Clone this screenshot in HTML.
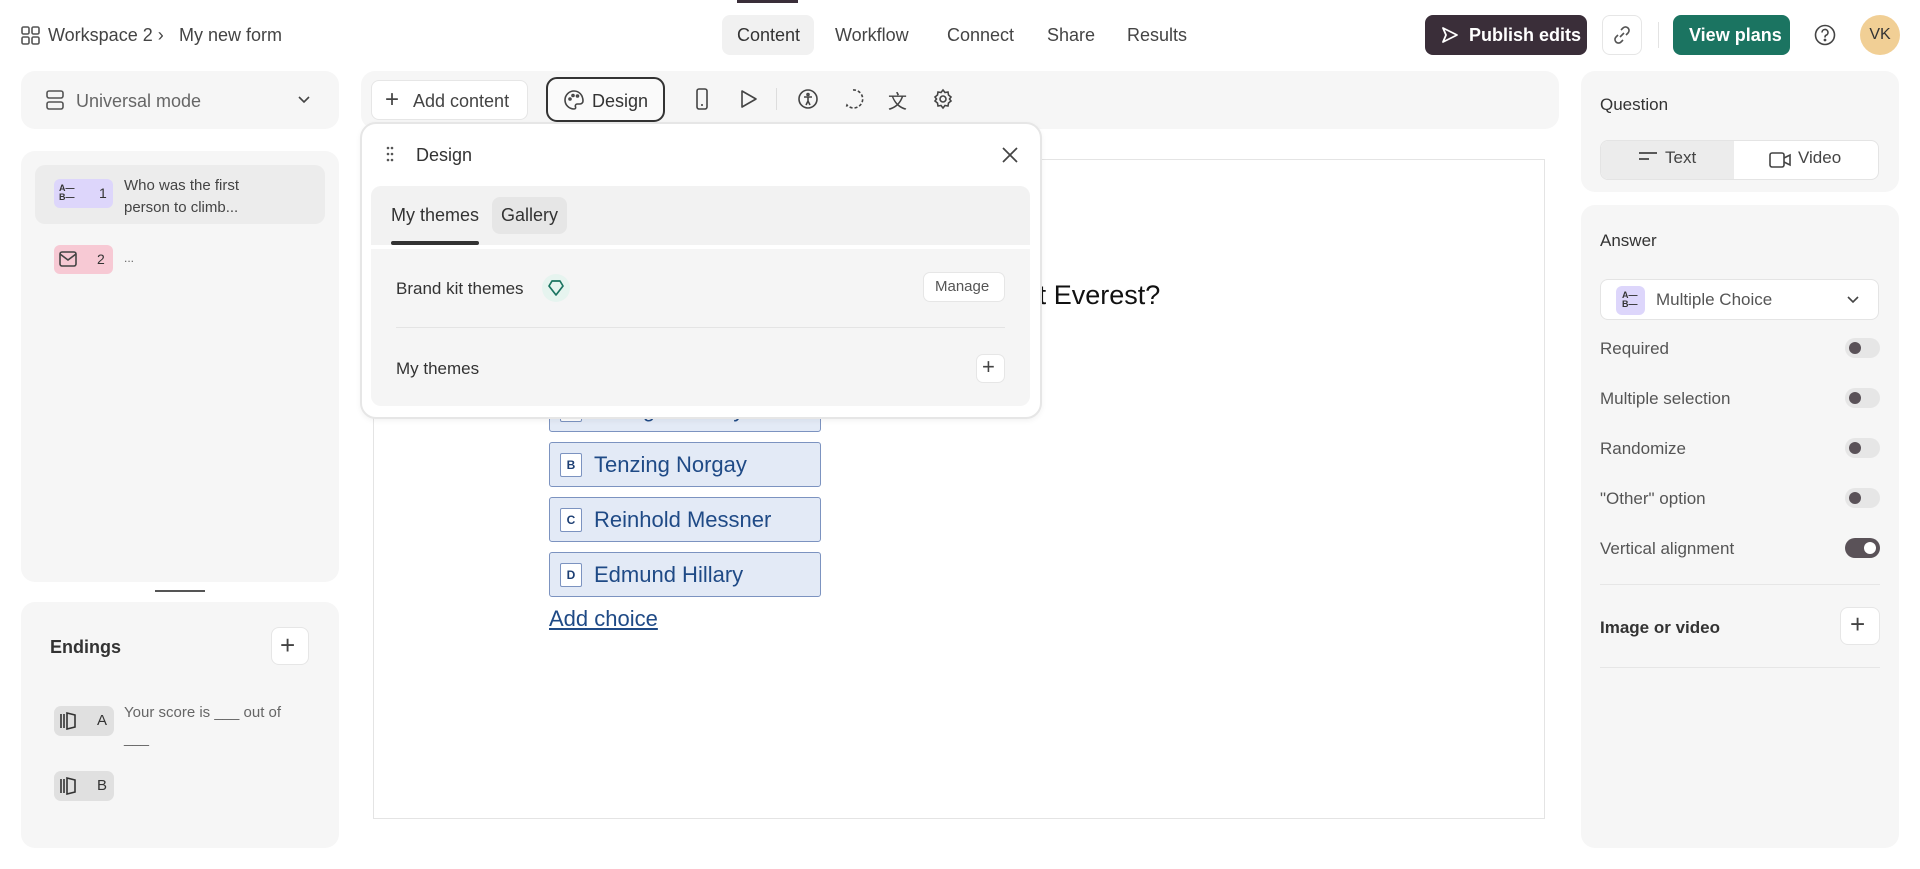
<!DOCTYPE html>
<html><head><meta charset="utf-8"><style>
*{box-sizing:border-box;margin:0;padding:0}
body{width:1920px;height:869px;background:#fff;font-family:"Liberation Sans",sans-serif;color:#333;position:relative;overflow:hidden}
.a{position:absolute}
.panel{position:absolute;background:#f6f6f6;border-radius:14px}
.t{position:absolute;white-space:nowrap}
.btnw{position:absolute;background:#fff;border:1px solid #e6e6e6;border-radius:8px}
.tog{position:absolute;left:1845px;width:35px;height:20px;border-radius:10px;background:#e6e6e6}
.tog i{position:absolute;left:4px;top:4px;width:12px;height:12px;border-radius:50%;background:#5a5258}
.choice{position:absolute;left:549px;width:272px;height:45px;background:#e3eaf6;border:1px solid #7c93c0;border-radius:3px}
.choice b{position:absolute;left:10px;top:10px;width:22px;height:24px;background:#fff;border:1px solid #7c93c0;border-radius:2px;font-size:12px;color:#1d3f73;text-align:center;line-height:22px}
.choice span{position:absolute;left:44px;top:9px;font-size:22px;color:#1f4a86}
svg{position:absolute}
</style></head><body>
<!-- top bar -->
<div class="a" style="left:737px;top:0;width:61px;height:3px;background:#3a2e39"></div>
<svg style="left:21px;top:26px" width="19" height="19" viewBox="0 0 19 19" fill="none" stroke="#555" stroke-width="1.6"><rect x="1" y="1" width="7" height="7" rx="1.5"/><rect x="11" y="1" width="7" height="7" rx="1.5"/><rect x="1" y="11" width="7" height="7" rx="1.5"/><rect x="11" y="11" width="7" height="7" rx="1.5"/></svg>
<div class="t" style="left:48px;top:25px;font-size:18px;color:#444">Workspace 2 ›</div>
<div class="t" style="left:179px;top:25px;font-size:18px;color:#444">My new form</div>
<div class="a" style="left:722px;top:15px;width:92px;height:40px;background:#f1f1f1;border-radius:8px"></div>
<div class="t" style="left:737px;top:25px;font-size:18px;color:#333">Content</div>
<div class="t" style="left:835px;top:25px;font-size:18px;color:#444">Workflow</div>
<div class="t" style="left:947px;top:25px;font-size:18px;color:#444">Connect</div>
<div class="t" style="left:1047px;top:25px;font-size:18px;color:#444">Share</div>
<div class="t" style="left:1127px;top:25px;font-size:18px;color:#444">Results</div>
<div class="a" style="left:1425px;top:15px;width:162px;height:40px;background:#3a2e39;border-radius:8px"></div>
<svg style="left:1441px;top:26px" width="18" height="18" viewBox="0 0 18 18" fill="none" stroke="#fff" stroke-width="1.8" stroke-linejoin="round"><path d="M2 2 L16 9 L2 16 L5 9 Z"/></svg>
<div class="t" style="left:1469px;top:25px;font-size:18px;color:#fff;font-weight:bold">Publish edits</div>
<div class="btnw" style="left:1602px;top:15px;width:40px;height:40px"></div>
<svg style="left:1612px;top:25px" width="20" height="20" viewBox="0 0 20 20" fill="none" stroke="#555" stroke-width="1.6"><path d="M8 12 L12 8"/><path d="M9 5 L11 3 a3.5 3.5 0 0 1 5 5 L14 10"/><path d="M11 15 L9 17 a3.5 3.5 0 0 1 -5 -5 L6 10"/></svg>
<div class="a" style="left:1658px;top:22px;width:1px;height:26px;background:#e3e3e3"></div>
<div class="a" style="left:1673px;top:15px;width:117px;height:40px;background:#1b7461;border-radius:8px"></div>
<div class="t" style="left:1689px;top:25px;font-size:18px;color:#fff;font-weight:bold">View plans</div>
<svg style="left:1814px;top:24px" width="22" height="22" viewBox="0 0 22 22" fill="none" stroke="#444" stroke-width="1.6"><circle cx="11" cy="11" r="9.5"/><path d="M8 8.5 a3 3 0 1 1 4 2.8 c-1 .4 -1 1 -1 2.2"/><circle cx="11" cy="16" r=".6" fill="#444"/></svg>
<div class="a" style="left:1860px;top:15px;width:40px;height:40px;border-radius:50%;background:#f1cf95;font-size:16px;line-height:40px;text-align:center;color:#333">VK</div>

<!-- left panels -->
<div class="panel" style="left:21px;top:71px;width:318px;height:58px"></div>
<svg style="left:46px;top:90px" width="18" height="20" viewBox="0 0 18 20" fill="none" stroke="#555" stroke-width="1.6"><rect x="1" y="1" width="16" height="7" rx="2"/><rect x="1" y="12" width="16" height="7" rx="2"/></svg>
<div class="t" style="left:76px;top:91px;font-size:18px;color:#666">Universal mode</div>
<svg style="left:297px;top:95px" width="14" height="10" viewBox="0 0 14 10" fill="none" stroke="#444" stroke-width="1.6"><path d="M2 2 L7 7 L12 2"/></svg>

<div class="panel" style="left:21px;top:151px;width:318px;height:431px"></div>
<div class="a" style="left:35px;top:165px;width:290px;height:59px;background:#ececec;border-radius:10px"></div>
<div class="a" style="left:54px;top:179px;width:59px;height:29px;background:#ddd6fb;border-radius:6px"></div>
<div class="t" style="left:59px;top:184px;font-size:9px;line-height:9px;color:#333;font-weight:bold">A—<br>B—</div>
<div class="t" style="left:99px;top:185px;font-size:14px;color:#333">1</div>
<div class="t" style="left:124px;top:175px;font-size:15px;line-height:22px;color:#444">Who was the first<br>person to climb...</div>
<div class="a" style="left:54px;top:245px;width:59px;height:29px;background:#f7c9d4;border-radius:6px"></div>
<svg style="left:59px;top:251px" width="18" height="16" viewBox="0 0 18 16" fill="none" stroke="#444" stroke-width="1.6"><rect x="1" y="1" width="16" height="14" rx="2"/><path d="M1 3 L9 9 L17 3"/></svg>
<div class="t" style="left:97px;top:251px;font-size:14px;color:#333">2</div>
<div class="t" style="left:124px;top:251px;font-size:12px;color:#666">...</div>
<div class="a" style="left:155px;top:590px;width:50px;height:2px;background:#555"></div>

<div class="panel" style="left:21px;top:602px;width:318px;height:246px"></div>
<div class="t" style="left:50px;top:637px;font-size:18px;font-weight:bold;color:#333">Endings</div>
<div class="btnw" style="left:271px;top:627px;width:38px;height:38px"></div>
<div class="t" style="left:280px;top:630px;font-size:26px;color:#444;font-weight:300">+</div>
<div class="a" style="left:54px;top:706px;width:60px;height:30px;background:#e0e0e0;border-radius:7px"></div>
<svg style="left:59px;top:712px" width="20" height="18" viewBox="0 0 20 18" fill="none" stroke="#333" stroke-width="1.6"><path d="M2 2v14M5 2v14"/><path d="M8 1 L16 3 V15 L8 17 Z"/></svg>
<div class="t" style="left:97px;top:712px;font-size:15px;color:#333">A</div>
<div class="t" style="left:124px;top:700px;font-size:15px;line-height:26px;color:#666">Your score is ___ out of<br>___</div>
<div class="a" style="left:54px;top:771px;width:60px;height:30px;background:#e0e0e0;border-radius:7px"></div>
<svg style="left:59px;top:777px" width="20" height="18" viewBox="0 0 20 18" fill="none" stroke="#333" stroke-width="1.6"><path d="M2 2v14M5 2v14"/><path d="M8 1 L16 3 V15 L8 17 Z"/></svg>
<div class="t" style="left:97px;top:777px;font-size:15px;color:#333">B</div>

<!-- toolbar -->
<div class="panel" style="left:361px;top:71px;width:1198px;height:58px"></div>
<div class="btnw" style="left:371px;top:80px;width:157px;height:40px"></div>
<div class="t" style="left:385px;top:86px;font-size:24px;color:#444;font-weight:300">+</div>
<div class="t" style="left:413px;top:91px;font-size:18px;color:#444">Add content</div>
<div class="a" style="left:546px;top:77px;width:119px;height:45px;border:2px solid #333;border-radius:11px;background:#fafafa"></div>
<svg style="left:563px;top:89px" width="22" height="22" viewBox="0 0 22 22" fill="none" stroke="#444" stroke-width="1.6"><path d="M11 2 a9 9 0 1 0 0 18 c1.5 0 2 -1 1.5 -2.2 c-.6 -1.4 .3 -2.8 1.8 -2.8 H17 a3 3 0 0 0 3 -3 C20 6 16 2 11 2z"/><circle cx="7" cy="10" r="1"/><circle cx="10" cy="6.5" r="1"/><circle cx="14.5" cy="7" r="1"/></svg>
<div class="t" style="left:592px;top:91px;font-size:18px;color:#333">Design</div>
<svg style="left:694px;top:87px" width="16" height="24" viewBox="0 0 16 24" fill="none" stroke="#444" stroke-width="1.6"><rect x="3" y="2" width="10" height="20" rx="2"/><path d="M7 18h2"/></svg>
<svg style="left:737px;top:88px" width="22" height="22" viewBox="0 0 22 22" fill="none" stroke="#444" stroke-width="1.6" stroke-linejoin="round"><path d="M5 3 L19 11 L5 19 Z"/></svg>
<div class="a" style="left:776px;top:88px;width:1px;height:22px;background:#ddd"></div>
<svg style="left:797px;top:88px" width="22" height="22" viewBox="0 0 22 22" fill="none" stroke="#444" stroke-width="1.6"><circle cx="11" cy="11" r="9"/><circle cx="11" cy="6.5" r="1"/><path d="M7 9h8M11 9v4l-2 4M11 13l2 4"/></svg>
<svg style="left:842px;top:88px" width="22" height="22" viewBox="0 0 22 22" fill="none" stroke="#444" stroke-width="1.6" stroke-dasharray="3 2"><path d="M11 2 a9 9 0 1 1 -6 15 L4 20"/></svg>
<div class="t" style="left:888px;top:87px;font-size:19px;color:#444">文</div>
<svg style="left:932px;top:88px" width="22" height="22" viewBox="0 0 22 22" fill="none" stroke="#444" stroke-width="1.6"><circle cx="11" cy="11" r="3"/><path d="M11 2 l2 2.5 3 -.5 .5 3 2.5 2 -1.5 2 1.5 2 -2.5 2 -.5 3 -3 -.5 -2 2.5 -2 -2.5 -3 .5 -.5 -3 -2.5 -2 1.5 -2 -1.5 -2 2.5 -2 .5 -3 3 .5z"/></svg>

<!-- canvas -->
<div class="a" style="left:373px;top:159px;width:1172px;height:660px;border:1px solid #e4e4e4;background:#fff"></div>
<div class="t" style="left:566px;top:280px;font-size:27px;color:#111">Who was the first person to climb Mount Everest?</div>
<div class="choice" style="top:387px"><b>A</b><span>George Mallory</span></div>
<div class="choice" style="top:442px"><b>B</b><span>Tenzing Norgay</span></div>
<div class="choice" style="top:497px"><b>C</b><span>Reinhold Messner</span></div>
<div class="choice" style="top:552px"><b>D</b><span>Edmund Hillary</span></div>
<div class="t" style="left:549px;top:606px;font-size:22px;color:#1f4a86;text-decoration:underline">Add choice</div>

<!-- design popup -->
<div class="a" style="left:360px;top:122px;width:682px;height:297px;background:#fff;border:2px solid #e6e6e6;border-radius:16px;box-shadow:0 2px 6px rgba(0,0,0,.05)"></div>
<svg style="left:386px;top:146px" width="8" height="16" viewBox="0 0 8 16" fill="#555"><circle cx="2" cy="2" r="1.3"/><circle cx="6" cy="2" r="1.3"/><circle cx="2" cy="8" r="1.3"/><circle cx="6" cy="8" r="1.3"/><circle cx="2" cy="14" r="1.3"/><circle cx="6" cy="14" r="1.3"/></svg>
<div class="t" style="left:416px;top:145px;font-size:18px;color:#333">Design</div>
<svg style="left:1002px;top:147px" width="16" height="16" viewBox="0 0 16 16" fill="none" stroke="#444" stroke-width="1.7"><path d="M1 1 L15 15 M15 1 L1 15"/></svg>
<div class="a" style="left:371px;top:186px;width:659px;height:59px;background:#f2f2f2;border-radius:10px 10px 0 0"></div>
<div class="t" style="left:391px;top:205px;font-size:18px;color:#333">My themes</div>
<div class="a" style="left:391px;top:241px;width:88px;height:4px;background:#333;border-radius:2px"></div>
<div class="a" style="left:492px;top:197px;width:75px;height:37px;background:#e6e6e6;border-radius:8px"></div>
<div class="t" style="left:501px;top:205px;font-size:18px;color:#333">Gallery</div>
<div class="a" style="left:371px;top:249px;width:659px;height:157px;background:#f5f5f5;border-radius:0 0 10px 10px"></div>
<div class="t" style="left:396px;top:279px;font-size:17px;color:#333">Brand kit themes</div>
<div class="a" style="left:542px;top:274px;width:28px;height:28px;border-radius:50%;background:#e6f4ef"></div>
<svg style="left:547px;top:279px" width="18" height="18" viewBox="0 0 18 18" fill="none" stroke="#1b7461" stroke-width="1.7" stroke-linejoin="round"><path d="M5 2 H13 L16 7 L9 16 L2 7 Z"/></svg>
<div class="btnw" style="left:923px;top:272px;width:82px;height:30px;border-radius:7px"></div>
<div class="t" style="left:935px;top:278px;font-size:15px;color:#555">Manage</div>
<div class="a" style="left:396px;top:327px;width:609px;height:1px;background:#e4e4e4"></div>
<div class="t" style="left:396px;top:359px;font-size:17px;color:#333">My themes</div>
<div class="btnw" style="left:976px;top:354px;width:29px;height:29px;border-radius:7px"></div>
<div class="t" style="left:982px;top:354px;font-size:22px;color:#444;font-weight:300">+</div>

<!-- right panels -->
<div class="panel" style="left:1581px;top:71px;width:318px;height:121px"></div>
<div class="t" style="left:1600px;top:95px;font-size:17px;color:#333">Question</div>
<div class="a" style="left:1600px;top:140px;width:279px;height:40px;background:#fff;border:1px solid #e4e4e4;border-radius:8px;overflow:hidden"><div style="width:133px;height:40px;background:#ececec"></div></div>
<svg style="left:1639px;top:151px" width="18" height="10" viewBox="0 0 18 10" stroke="#444" stroke-width="1.7"><path d="M0 2h18M0 8h10"/></svg>
<div class="t" style="left:1665px;top:148px;font-size:17px;color:#444">Text</div>
<svg style="left:1769px;top:152px" width="22" height="16" viewBox="0 0 22 16" fill="none" stroke="#444" stroke-width="1.6"><rect x="1" y="1" width="14" height="14" rx="2"/><path d="M15 6 L21 3 V13 L15 10"/></svg>
<div class="t" style="left:1798px;top:148px;font-size:17px;color:#444">Video</div>

<div class="panel" style="left:1581px;top:205px;width:318px;height:643px"></div>
<div class="t" style="left:1600px;top:231px;font-size:17px;color:#333">Answer</div>
<div class="a" style="left:1600px;top:279px;width:279px;height:41px;background:#fff;border:1px solid #e4e4e4;border-radius:8px"></div>
<div class="a" style="left:1616px;top:286px;width:29px;height:29px;background:#ddd6fb;border-radius:6px"></div>
<div class="t" style="left:1622px;top:291px;font-size:9px;line-height:9px;color:#333;font-weight:bold">A—<br>B—</div>
<div class="t" style="left:1656px;top:290px;font-size:17px;color:#555">Multiple Choice</div>
<svg style="left:1846px;top:295px" width="14" height="10" viewBox="0 0 14 10" fill="none" stroke="#444" stroke-width="1.6"><path d="M2 2 L7 7 L12 2"/></svg>
<div class="t" style="left:1600px;top:339px;font-size:17px;color:#555">Required</div><div class="tog" style="top:338px"><i></i></div>
<div class="t" style="left:1600px;top:389px;font-size:17px;color:#555">Multiple selection</div><div class="tog" style="top:388px"><i></i></div>
<div class="t" style="left:1600px;top:439px;font-size:17px;color:#555">Randomize</div><div class="tog" style="top:438px"><i></i></div>
<div class="t" style="left:1600px;top:489px;font-size:17px;color:#555">"Other" option</div><div class="tog" style="top:488px"><i></i></div>
<div class="t" style="left:1600px;top:539px;font-size:17px;color:#555">Vertical alignment</div><div class="tog" style="top:538px;background:#5a5258"><i style="left:19px;background:#fff"></i></div>
<div class="a" style="left:1600px;top:584px;width:280px;height:1px;background:#e6e6e6"></div>
<div class="t" style="left:1600px;top:618px;font-size:17px;color:#333;font-weight:bold">Image or video</div>
<div class="btnw" style="left:1840px;top:607px;width:40px;height:38px"></div>
<div class="t" style="left:1850px;top:609px;font-size:26px;color:#444;font-weight:300">+</div>
<div class="a" style="left:1600px;top:667px;width:280px;height:1px;background:#e6e6e6"></div>
</body></html>
